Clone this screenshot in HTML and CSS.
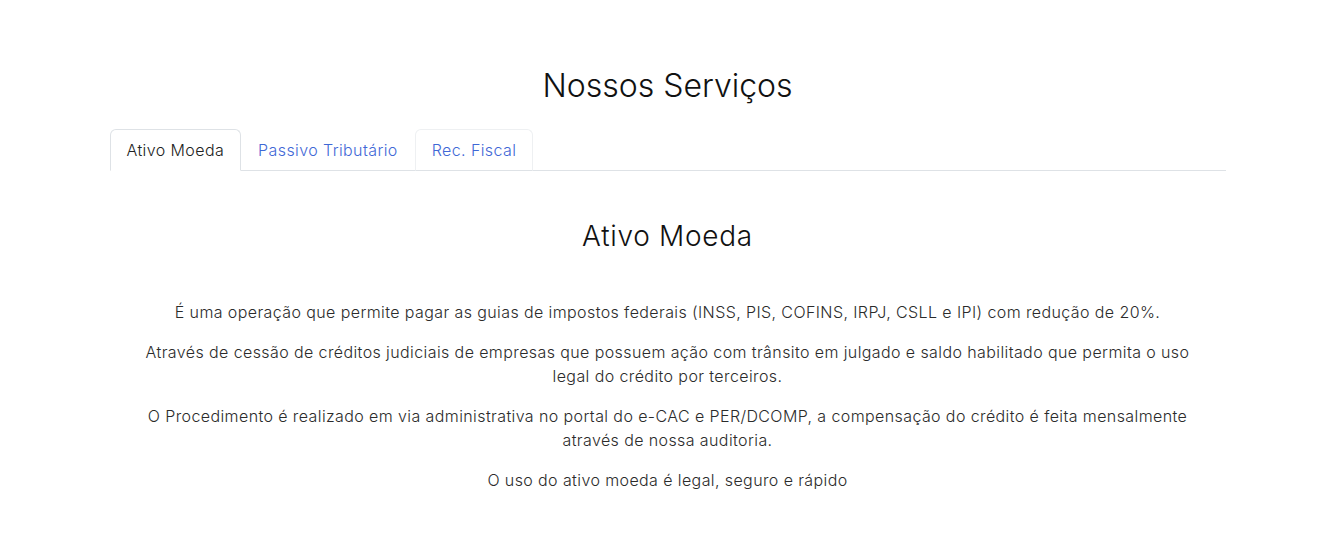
FILE: index.html
```html
<!DOCTYPE html>
<html lang="pt-BR">
<head>
<meta charset="utf-8">
<title>Nossos Serviços</title>
<link rel="stylesheet" href="styles.css">
</head>
<body>
<section class="services">
  <div class="container">
    <h2 class="title">Nossos Serviços</h2>
    <ul class="tabs">
      <li><a class="tab active" href="#">Ativo Moeda</a></li>
      <li><a class="tab" href="#">Passivo Tributário</a></li>
      <li><a class="tab hover" href="#">Rec. Fiscal</a></li>
    </ul>
    <div class="pane">
      <h3 class="pane-title">Ativo Moeda</h3>
      <div class="pane-text">
        <p>É uma operação que permite pagar as guias de impostos federais (INSS, PIS, COFINS, IRPJ, CSLL e IPI) com redução de 20%.</p>
        <p>Através de cessão de créditos judiciais de empresas que possuem ação com trânsito em julgado e saldo habilitado que permita o uso legal do crédito por terceiros.</p>
        <p>O Procedimento é realizado em via administrativa no portal do e-CAC e PER/DCOMP, a compensação do crédito é feita mensalmente através de nossa auditoria.</p>
        <p>O uso do ativo moeda é legal, seguro e rápido</p>
      </div>
    </div>
  </div>
</section>
</body>
</html>
```
FILE: styles.css
```css
* { box-sizing: border-box; }
html, body { margin: 0; background: #fff; }
body {
  font-family: "Inter", "Noto Sans", sans-serif;
  font-weight: 300;
  font-size: 16px;
  line-height: 24px;
  color: #2b2b2b;
  letter-spacing: 0.4px;
}
.services { padding-top: 67px; padding-bottom: 40px; }
.container { max-width: 1140px; margin: 0 auto; padding: 0 12px; }
.title {
  margin: 0 0 24px;
  text-align: center;
  font-size: 32px;
  line-height: 38px;
  font-weight: 300;
  letter-spacing: 0;
  color: #111;
}
.tabs {
  display: flex;
  list-style: none;
  margin: 0;
  padding: 0;
  border-bottom: 1px solid #dee2e6;
}
.tabs li { margin-bottom: -1px; }
.tab {
  display: block;
  padding: 8px 16px;
  border: 1px solid transparent;
  border-radius: 6px 6px 0 0;
  color: #3f68d6;
  text-decoration: none;
}
.tab.active {
  color: #222;
  background: #fff;
  border-color: #dee2e6 #dee2e6 #fff;
}
.tab.hover { border-color: #eef0f2 #eef0f2 #dee2e6; }
.pane { padding-top: 48px; text-align: center; }
.pane-title {
  margin: 0 0 47px;
  font-size: 28px;
  line-height: 34px;
  font-weight: 300;
  letter-spacing: 0.7px;
  color: #111;
}
.pane-text { max-width: 1072px; margin: 0 auto; }
.pane-text p { margin: 0 0 16px; }
```
